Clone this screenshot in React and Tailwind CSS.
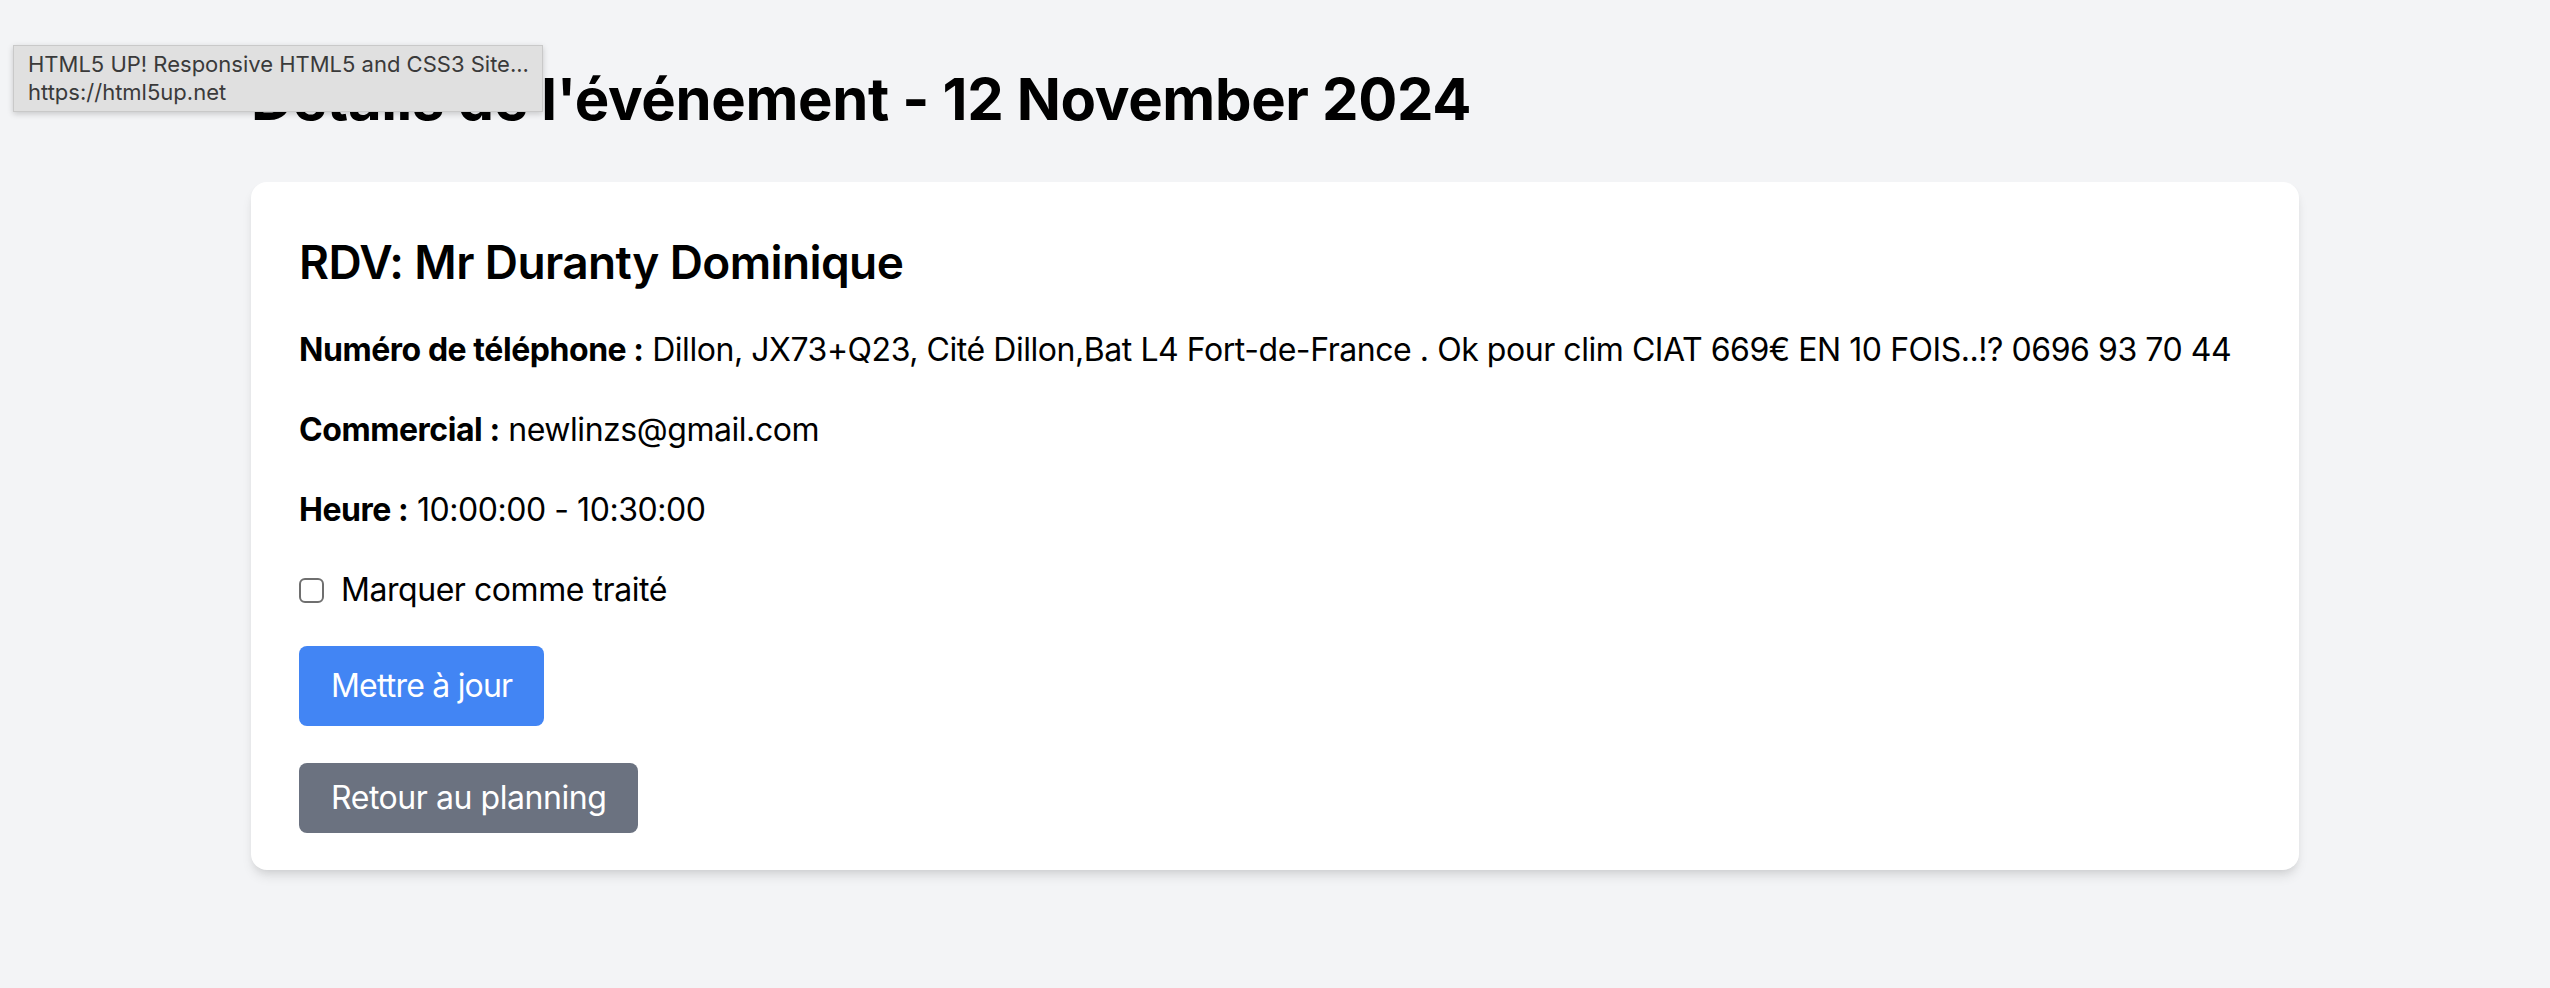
export default function App() {
  return (
    <div className="relative min-h-screen bg-[#f3f4f6] font-['Inter','Liberation_Sans',sans-serif] text-black tracking-[-0.028em]">
      <div className="absolute left-[13px] top-[45px] w-[530px] h-[67px] bg-[#e0e0e0] border border-[#c9c9c9] shadow-[0_2px_6px_rgba(0,0,0,0.18)] px-[14px] pt-[4px] text-[22px] leading-[28px] tracking-normal text-[#3a3a3a] z-10 whitespace-nowrap overflow-hidden">
        <div>HTML5 UP! Responsive HTML5 and CSS3 Site...</div>
        <div>https://html5up.net</div>
      </div>
      <div className="mx-auto w-[2048px] pt-[63px]">
        <h1 className="text-[58px] leading-[72px] font-bold mb-[47px] tracking-[-0.006em]">Détails de l'événement - 12 November 2024</h1>
        <div className="bg-white rounded-[16px] shadow-[0_8px_12px_-2px_rgba(0,0,0,0.1),0_4px_8px_-4px_rgba(0,0,0,0.1)] px-[48px] pt-[48px] pb-[37px]">
          <h2 className="text-[46px] leading-[64px] font-semibold mb-[32px] tracking-[-0.013em]">RDV: Mr Duranty Dominique</h2>
          <p className="text-[32px] leading-[48px] mb-[32px] whitespace-nowrap">
            <strong className="font-bold">Numéro de téléphone :</strong> Dillon, JX73+Q23, Cité Dillon,Bat L4 Fort-de-France . Ok pour clim CIAT 669€ EN 10 FOIS..!? 0696 93 70 44
          </p>
          <p className="text-[32px] leading-[48px] mb-[32px]">
            <strong className="font-bold">Commercial :</strong> newlinzs@gmail.com
          </p>
          <p className="text-[32px] leading-[48px] mb-[32px]">
            <strong className="font-bold">Heure :</strong> 10:00:00 - 10:30:00
          </p>
          <label className="flex items-center h-[48px] mb-[32px] text-[32px] leading-[48px]">
            <span className="w-[25px] h-[25px] border-2 border-[#6f6f6f] rounded-[6px] bg-white mr-[17px] shrink-0"></span>
            Marquer comme traité
          </label>
          <button className="flex items-center h-[80px] px-[32px] bg-[#4285f4] text-white rounded-[8px] text-[32px] tracking-[-0.025em]">Mettre à jour</button>
          <div className="mt-[37px]">
            <a className="inline-flex items-center h-[70px] px-[32px] bg-[#6b7280] text-white rounded-[8px] text-[32px]">Retour au planning</a>
          </div>
        </div>
      </div>
    </div>
  );
}
